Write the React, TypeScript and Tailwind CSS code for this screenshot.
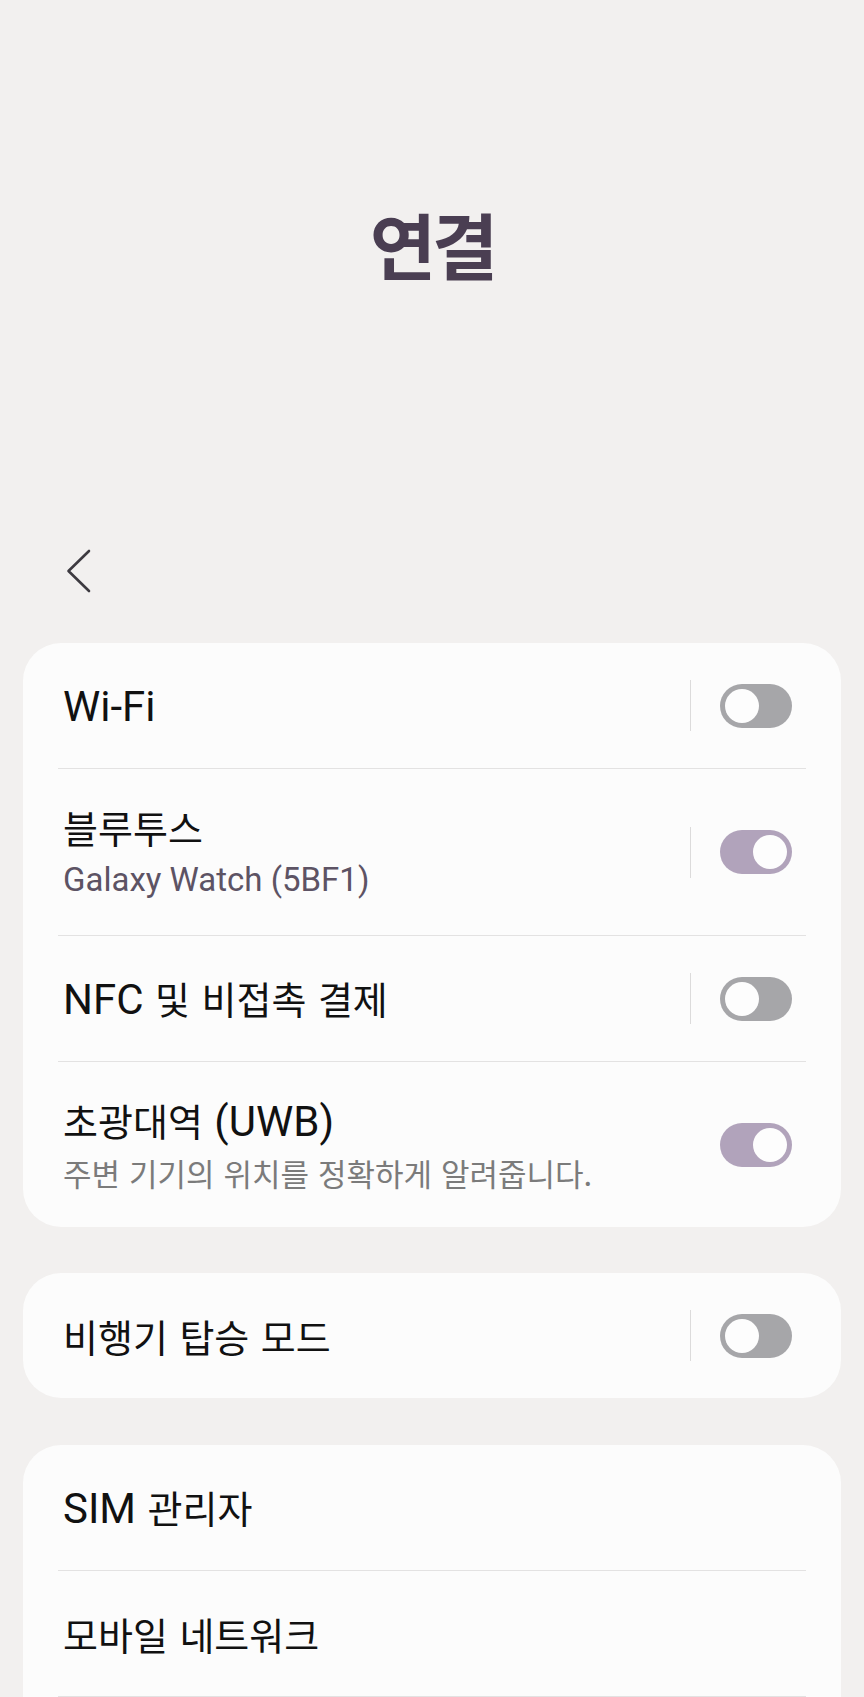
import React from "react";

const KR = "font-['Noto_Sans_CJK_KR',sans-serif]";

function Lat({ children }: { children: React.ReactNode }) {
  return <span className="font-['Roboto','Noto_Sans_CJK_KR',sans-serif] text-[42px] [word-spacing:0px]">{children}</span>;
}
function LatSub({ children }: { children: React.ReactNode }) {
  return <span className="font-['Roboto','Noto_Sans_CJK_KR',sans-serif] text-[33px] [word-spacing:0px]">{children}</span>;
}

function Toggle({ on }: { on: boolean }) {
  return on ? (
    <div className="w-[72px] h-[44px] rounded-full bg-[#b1a3bb] flex items-center justify-end pr-[5px] shrink-0">
      <div className="w-[34px] h-[34px] rounded-full bg-[#fdfdfd]" />
    </div>
  ) : (
    <div className="w-[72px] h-[44px] rounded-full bg-[#a6a6a9] flex items-center pl-[5px] shrink-0">
      <div className="w-[34px] h-[34px] rounded-full bg-[#fdfdfd]" />
    </div>
  );
}

function Row({
  title,
  sub,
  subClass,
  toggle,
  sep = true,
  h = "h-[125px]",
}: {
  title: React.ReactNode;
  sub?: React.ReactNode;
  subClass?: string;
  toggle?: boolean;
  sep?: boolean;
  h?: string;
}) {
  return (
    <div className={`flex items-center pl-[40px] pr-[49px] ${h}`}>
      <div className="flex-1 flex flex-col justify-center">
        <div className={`${KR} text-[38px] leading-[54px] text-[#111111] whitespace-nowrap [word-spacing:3px]`}>{title}</div>
        {sub && (
          <div className={`${KR} text-[31px] leading-[48px] whitespace-nowrap [word-spacing:2px] ${subClass ?? ""}`}>{sub}</div>
        )}
      </div>
      {toggle !== undefined && (
        <div className="flex items-center">
          {sep && <div className="w-px h-[51px] bg-[#dcdbdb] mr-[29px]" />}
          <Toggle on={toggle} />
        </div>
      )}
    </div>
  );
}

function Divider() {
  return <div className="mx-[35px] h-px bg-[#e3e2e2]" />;
}

export default function App() {
  return (
    <div className="w-[864px] h-[1697px] overflow-hidden bg-[#f2f0ef]">
      <div className="h-[493px] flex items-center justify-center pb-[8px]">
        <h1 className={`${KR} text-[72px] font-bold leading-none tracking-[-4px] text-[#4a3e52]`}>연결</h1>
      </div>
      <div className="h-[150px] pl-[66px] pt-[56px]">
        <svg width="26" height="44" viewBox="0 0 26 44" fill="none">
          <path d="M23 2 L2.5 22 L23 42" stroke="#3d3a40" strokeWidth="2.6" strokeLinecap="round" strokeLinejoin="round" />
        </svg>
      </div>

      <div className="mx-[23px] bg-[#fcfcfc] rounded-[38px]">
        <Row title={<Lat>Wi-Fi</Lat>} toggle={false} />
        <Divider />
        <Row
          h="h-[166px]"
          title="블루투스"
          sub={<LatSub>Galaxy Watch (5BF1)</LatSub>}
          subClass="text-[#5d5364]"
          toggle={true}
        />
        <Divider />
        <Row title={<><Lat>NFC</Lat> 및 비접촉 결제</>} toggle={false} />
        <Divider />
        <Row
          h="h-[165px]"
          title={<>초광대역 <Lat>(UWB)</Lat></>}
          sub="주변 기기의 위치를 정확하게 알려줍니다."
          subClass="text-[#7b7b7b]"
          toggle={true}
          sep={false}
        />
      </div>

      <div className="mx-[23px] mt-[46px] bg-[#fcfcfc] rounded-[38px]">
        <Row title="비행기 탑승 모드" toggle={false} />
      </div>

      <div className="mx-[23px] mt-[47px] bg-[#fcfcfc] rounded-[38px]">
        <Row title={<><Lat>SIM</Lat> 관리자</>} />
        <Divider />
        <Row title="모바일 네트워크" />
        <Divider />
        <div className="h-[125px]" />
      </div>
    </div>
  );
}
